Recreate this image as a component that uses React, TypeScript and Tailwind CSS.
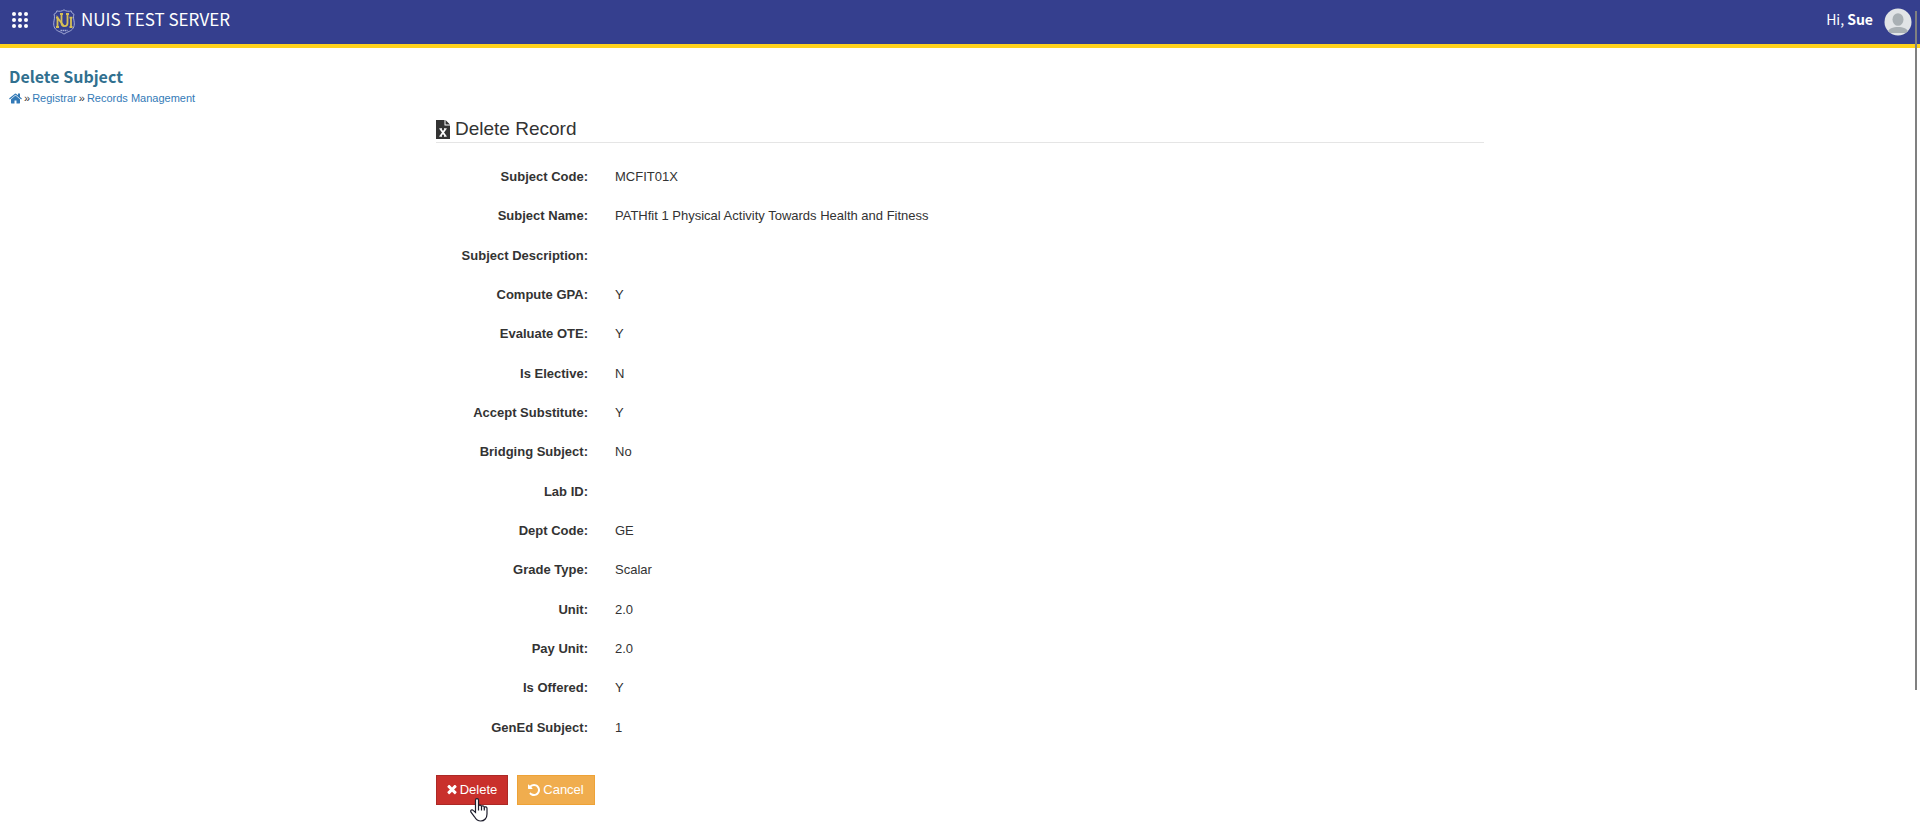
const fields = [
  { label: "Subject Code", value: "MCFIT01X" },
  { label: "Subject Name", value: "PATHfit 1 Physical Activity Towards Health and Fitness" },
  { label: "Subject Description", value: "" },
  { label: "Compute GPA", value: "Y" },
  { label: "Evaluate OTE", value: "Y" },
  { label: "Is Elective", value: "N" },
  { label: "Accept Substitute", value: "Y" },
  { label: "Bridging Subject", value: "No" },
  { label: "Lab ID", value: "" },
  { label: "Dept Code", value: "GE" },
  { label: "Grade Type", value: "Scalar" },
  { label: "Unit", value: "2.0" },
  { label: "Pay Unit", value: "2.0" },
  { label: "Is Offered", value: "Y" },
  { label: "GenEd Subject", value: "1" },
];

const dots = [2, 8, 14];

function GridIcon() {
  return (
    <svg viewBox="0 0 16 16" className="size-4" fill="currentColor">
      {dots.map((y) => dots.map((x) => <circle key={`${x}-${y}`} cx={x} cy={y} r="2" />))}
    </svg>
  );
}

function Crest() {
  return (
    <svg viewBox="0 0 22 26" className="h-[26px] w-[22px]" fill="none">
      <path
        d="M11 .8C9 2.4 6 2.6 3.8 1.9 3.6 3.5 2.5 4.7 1 5.2c1 2.6.2 5.2-.2 8-.6 5 1.6 7.6 5 9.2 2.200 1 4 1.600 5.200 2.800 1.200-1.200 3-1.800 5.200-2.800 3.400-1.600 5.600-4.200 5-9.200-.4-2.800-1.200-5.400-.2-8-1.500-.5-2.600-1.700-2.800-3.300C16 2.600 13 2.400 11 .8z"
        stroke="#a5acd6"
      />
      <g stroke="#d6bf55" strokeWidth="1.8">
        <path d="M4.500 18V8.700l6.500 8.500M3 8.700h2.500M3 18h3" />
        <path d="M8.500 5v9c0 4.200 6 4.200 6 0V5M7 5h3M13 5h3" />
        <path d="M18 18V8.700M16.500 8.700h3M16.500 18h3" />
      </g>
      <path d="M7.500 21.500h7" stroke="#a5acd6" strokeDasharray="1.500 .5" strokeWidth="1.500" />
    </svg>
  );
}

function Avatar() {
  return (
    <svg viewBox="0 0 28 28" className="size-7">
      <clipPath id="avatar-clip">
        <circle cx="14" cy="14" r="13.500" />
      </clipPath>
      <circle cx="14" cy="14" r="13.500" fill="#e1e4e6" />
      <g clipPath="url(#avatar-clip)" fill="#a9b0b4">
        <ellipse cx="14" cy="11.500" rx="5.500" ry="6.300" />
        <path d="M3 25c1.500-4.500 6-6 11-6s9.500 1.500 11 6z" />
      </g>
    </svg>
  );
}

function HomeIcon() {
  return (
    <svg viewBox="64 64 1664 1664" className="size-[13px]" fill="currentColor">
      <path d="M1472 992v480q0 26-19 45t-45 19h-384v-384h-256v384h-384q-26 0-45-19t-19-45v-480q0-1 .5-3t.5-3l575-474 575 474q1 2 1 6zm223-69l-62 74q-8 9-21 11h-3q-13 0-21-7l-692-577-692 577q-12 8-24 7-13-2-21-11l-62-74q-8-10-7-23.5t11-21.5l719-599q32-26 76-26t76 26l244 204v-195q0-14 9-23t23-9h192q14 0 23 9t9 23v408l219 182q10 8 11 21.5t-7 23.5z" />
    </svg>
  );
}

function ExcelIcon() {
  return (
    <svg viewBox="0 0 14 19" className="h-[19px] w-[14px]">
      <path d="M0 0h8.500v5.500H14V19H0zM9.500 0L14 4.500H9.500z" fill="#333" />
      <path d="M4.500 9l5 7M9.500 9l-5 7" stroke="#fff" strokeWidth="1.800" />
      <path d="M3.300 8.800h2.700M8 8.800h2.700M3.300 16.200h2.700M8 16.200h2.700" stroke="#fff" strokeWidth="1" />
    </svg>
  );
}

function TimesIcon() {
  return (
    <svg viewBox="256 384 1280 1280" className="size-[10px]" fill="currentColor">
      <path d="M1490 1322q0 40-28 68l-136 136q-28 28-68 28t-68-28l-294-294-294 294q-28 28-68 28t-68-28l-136-136q-28-28-28-68t28-68l294-294-294-294q-28-28-28-68t28-68l136-136q28-28 68-28t68 28l294 294 294-294q28-28 68-28t68 28l136 136q28 28 28 68t-28 68l-294 294 294 294q28 28 28 68z" />
    </svg>
  );
}

function UndoIcon() {
  return (
    <svg viewBox="0 128 1536 1536" className="size-3" fill="currentColor">
      <path d="M1536 896q0 156-61 298t-164 245-245 164-298 61q-172 0-327-72.5t-264-204.5q-7-10-6.5-22.5t8.5-20.5l137-138q10-9 25-9 16 2 23 12 73 95 179 147t225 52q104 0 198.500-40.500t163.500-109.500 109.500-163.500 40.500-198.500-40.500-198.500-109.500-163.500-163.500-109.500-198.500-40.500q-98 0-188 35.500t-160 101.500l137 138q31 30 14 69-17 40-59 40h-448q-26 0-45-19t-19-45v-448q0-42 40-59 39-17 69 14l130 129q107-101 244.500-156.500t284.500-55.500q156 0 298 61t245 164 164 245 61 298z" />
    </svg>
  );
}

function HandCursor() {
  return (
    <svg viewBox="0 0 18 24" className="pointer-events-none absolute top-[23px] left-[34px] h-6 w-[18px]">
      <path
        d="M5.500 14.500V2.200c0-2 3-2 3 0V8c.3-1.200 2.700-1.200 3 .5.500-1 2.600-.8 2.800.8.700-.9 2.700-.6 2.700 1.200V16c0 4-2.500 7-6.200 7-3.300 0-4.800-1.500-6.300-4.200L1 14.200c-1-2 1-3 2.200-1.800z"
        fill="#fff"
        stroke="#1c1c2b"
        strokeWidth="1.200"
      />
      <path d="M8.500 8v4.500M11.500 8.500v4M14.300 9.500v3" stroke="#1c1c2b" strokeWidth="1.200" />
    </svg>
  );
}

function Header() {
  return (
    <header className="flex h-12 items-center border-b-4 border-[#ffd21c] bg-[#353f8e] pr-2 pl-3 font-['Noto_Sans_CJK_JP',sans-serif] text-white">
      <button type="button" aria-label="Menu" className="mb-1">
        <GridIcon />
      </button>
      <a href="#" className="ml-[25px] flex items-center gap-1.5">
        <Crest />
        <span className="pb-1.5 text-[17px] leading-6">NUIS TEST SERVER</span>
      </a>
      <div className="ml-auto flex items-center gap-[11px]">
        <span className="pb-1.5 text-sm leading-5">
          Hi, <b>Sue</b>
        </span>
        <Avatar />
      </div>
    </header>
  );
}

export default function App() {
  return (
    <div className="min-h-screen font-['Liberation_Sans',Arial,sans-serif] text-[13px] text-[#333]">
      <Header />
      <div className="px-[9px] pt-4">
        <h1 className="font-['Noto_Sans_CJK_JP',sans-serif] text-base leading-6 font-bold text-[#31708f]">
          Delete Subject
        </h1>
        <nav className="flex items-center gap-0.5 text-[11px] leading-5">
          <a href="#" aria-label="Home" className="text-[#337ab7]">
            <HomeIcon />
          </a>
          <span>»</span>
          <a href="#" className="text-[#337ab7]">Registrar</a>
          <span>»</span>
          <a href="#" className="text-[#337ab7]">Records Management</a>
        </nav>
      </div>

      <main className="mx-auto mt-2 max-w-[1048px] pb-6">
        <h2 className="flex items-center gap-[5px] border-b border-[#e5e5e5] py-px text-[19px] leading-6">
          <ExcelIcon />
          Delete Record
        </h2>
        <dl className="mt-[14px] grid min-h-[590px] auto-rows-fr">
          {fields.map((field) => (
            <div key={field.label} className="flex items-center gap-[27px]">
              <dt className="w-[152px] text-right font-bold">{field.label}:</dt>
              <dd>{field.value}</dd>
            </div>
          ))}
        </dl>
        <div className="mt-7 flex gap-[9px]">
          <div className="relative">
            <button
              type="button"
              className="flex h-[30px] w-[72px] items-center justify-center gap-[3px] border border-[#ac2925] bg-[#c9302c] text-white"
            >
              <TimesIcon />
              Delete
            </button>
            <HandCursor />
          </div>
          <button
            type="button"
            className="flex h-[30px] w-[78px] items-center justify-center gap-[3px] border border-[#eea236] bg-[#f0ad4e] text-white"
          >
            <UndoIcon />
            Cancel
          </button>
        </div>
      </main>
      {/* overlay scroll thumb */}
      <div className="fixed top-[11px] right-[3px] h-[82vh] w-0.5 bg-[#808080]" />
    </div>
  );
}
